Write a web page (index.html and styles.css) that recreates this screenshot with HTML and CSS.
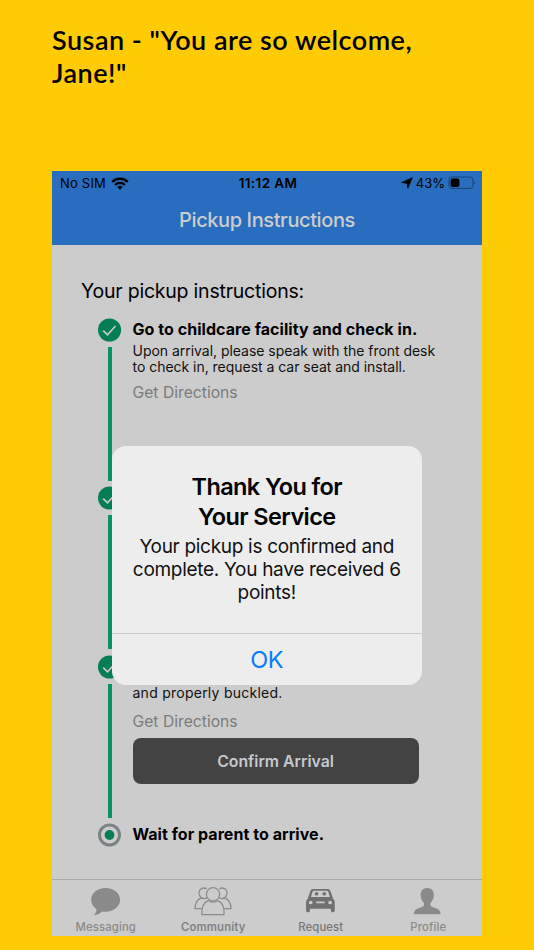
FILE: index.html
```html
<!DOCTYPE html>
<html lang="en">
<head>
  <meta charset="UTF-8">
  <meta name="viewport" content="width=device-width, initial-scale=1.0">
  <title>Pickup Instructions</title>
  <link rel="stylesheet" href="styles.css">
</head>
<body>
  <h1 class="caption">Susan - "You are so welcome,<br>Jane!"</h1>

  <div class="phone">
    <header class="header">
      <div class="status-bar">
        <div class="status-left">
          <span class="carrier">No SIM</span>
          <svg class="wifi" width="18" height="13" viewBox="0 0 18 13" fill="none" stroke="#000" stroke-width="2.3">
            <path d="M1.2 4.9a11.2 11.2 0 0 1 15.6 0"/>
            <path d="M4 8a7.1 7.1 0 0 1 10 0"/>
            <path d="M9 12.7 6.3 10a3.8 3.8 0 0 1 5.4 0z" fill="#000" stroke="none"/>
          </svg>
        </div>
        <span class="time">11:12 AM</span>
        <div class="status-right">
          <svg class="location" width="12" height="12" viewBox="0 0 12 12">
            <path d="M11.3.7 6.9 11.3 6 6.4.6 5.5z" fill="#000" stroke="#000" stroke-width=".7" stroke-linejoin="round"/>
          </svg>
          <span class="percent">43%</span>
          <svg class="battery" width="28" height="14" viewBox="0 0 28 14">
            <rect x="1" y="1" width="24" height="11.5" rx="3" fill="none" stroke="#1b4577"/>
            <rect x="2.6" y="2.5" width="8.8" height="8.6" rx="2" fill="#000"/>
            <path d="M26.2 4.6q1.6 2.1 0 4.2z" fill="#1b4577"/>
          </svg>
        </div>
      </div>
      <h2 class="header-title">Pickup Instructions</h2>
    </header>

    <main class="content">
      <h3 class="content-title">Your pickup instructions:</h3>

      <div class="step">
        <div class="rail">
          <svg class="marker" width="24" height="24" viewBox="0 0 24 24">
            <circle cx="11.5" cy="12" r="11.6" fill="#067e55"/>
            <path d="M5.3 12.6 9.5 16.8 17.5 8" fill="none" stroke="#ccc" stroke-width="1.5"/>
          </svg>
          <div class="line"></div>
        </div>
        <div class="step-body">
          <h4 class="step-title">Go to childcare facility and check in.</h4>
          <p class="step-text">Upon arrival, please speak with the front desk<br>to check in, request a car seat and install.</p>
          <a class="directions">Get Directions</a>
        </div>
      </div>

      <div class="step">
        <div class="rail">
          <svg class="marker" width="24" height="24" viewBox="0 0 24 24">
            <circle cx="11.5" cy="12" r="11.6" fill="#067e55"/>
            <path d="M5.3 12.6 9.5 16.8 17.5 8" fill="none" stroke="#ccc" stroke-width="1.5"/>
          </svg>
          <div class="line"></div>
        </div>
      </div>

      <div class="step">
        <div class="rail">
          <svg class="marker" width="24" height="24" viewBox="0 0 24 24">
            <circle cx="11.5" cy="12" r="11.6" fill="#067e55"/>
            <path d="M5.3 12.6 9.5 16.8 17.5 8" fill="none" stroke="#ccc" stroke-width="1.5"/>
          </svg>
          <div class="line"></div>
        </div>
        <div class="step-body step-body-end">
          <p class="step-text">and properly buckled.</p>
          <a class="directions">Get Directions</a>
          <button class="confirm">Confirm Arrival</button>
        </div>
      </div>

      <div class="step step-last">
        <div class="rail">
          <svg class="marker" width="24" height="24" viewBox="0 0 24 24">
            <circle cx="11.5" cy="12" r="10" fill="none" stroke="#7b8286" stroke-width="3"/>
            <circle cx="11.5" cy="12" r="4.9" fill="#067e55"/>
          </svg>
        </div>
        <div class="step-body">
          <h4 class="step-title">Wait for parent to arrive.</h4>
        </div>
      </div>
    </main>

    <nav class="tab-bar">
      <div class="tab">
        <svg width="40" height="32" viewBox="0 0 40 32">
          <path d="M19.5 1C27.8 1 34.5 6.2 34.5 13.2S27.8 25.6 19.5 25.6c-1.3 0-2.5-.1-3.6-.3-2.4 2.5-5.3 3.7-8.6 3.7 1.8-1.5 2.9-3.4 2.9-6C6.8 20.7 4.7 17.2 4.7 13.2 4.7 6.2 11.3 1 19.5 1z" fill="#8a8a8a"/>
        </svg>
        <span>Messaging</span>
      </div>
      <div class="tab tab-bold">
        <svg width="40" height="32" viewBox="0 0 40 32" fill="none" stroke="#8c8c8c" stroke-width="1.3">
          <circle cx="20" cy="7.5" r="6.8"/>
          <path d="M8.6 28.4c-.4-7 1.4-12.5 6.7-14.3 3 1.9 6.4 1.9 9.4 0 5.3 1.8 7.1 7.3 6.7 14.3z"/>
          <path d="M13.5 1.9C9.3-.3 5.5 2.1 5.5 6.3c0 2.3 1 3.9 2.6 4.9C3.4 12.8 1.5 17 1.5 22.3h6.9"/>
          <path d="M8.1 11.2c1.7 1 4 1 5.7-.1"/>
          <path d="M26.5 1.9c4.2-2.2 8 .2 8 4.4 0 2.3-1 3.9-2.6 4.9 4.7 1.6 6.6 5.8 6.6 11.1h-6.9"/>
          <path d="M31.9 11.2c-1.7 1-4 1-5.7-.1"/>
        </svg>
        <span>Community</span>
      </div>
      <div class="tab tab-dark">
        <svg width="40" height="32" viewBox="0 0 40 32">
          <path fill="#707070" fill-rule="evenodd" d="M11.9 2h15q2.2 0 2.9 2.1l2.7 8q1.7 1.3 1.7 3.5v8.6q0 1.9-2 1.9t-2-1.9v-1.7H8.6v1.7q0 1.9-2 1.9t-2-1.9v-8.6q0-2.2 1.7-3.5l2.7-8q.7-2.1 2.9-2.1zM12.8 3.9q-1.2 0-1.5 1.1L9.6 10.3h19.6L27.5 5q-.3-1.1-1.5-1.1z"/>
          <circle cx="15.4" cy="7" r="1.9" fill="#707070"/>
          <circle cx="23.4" cy="7" r="1.9" fill="#707070"/>
          <circle cx="9.4" cy="16" r="1.9" fill="#ccc"/>
          <circle cx="29.4" cy="16" r="1.9" fill="#ccc"/>
          <rect x="14.9" y="14.9" width="9" height="2" rx="1" fill="#ccc"/>
        </svg>
        <span>Request</span>
      </div>
      <div class="tab">
        <svg width="40" height="32" viewBox="0 0 40 32">
          <path d="M19.2 1c4.6 0 6.9 3 6.8 7.2-.1 3.7-1.3 6.2-3.2 8.1-.9 1.6-.3 3.8 2.3 4.6 4.5 1.5 7.6 2.2 7.9 7.1H5.4c.3-4.9 3.4-5.6 7.9-7.1 2.6-.8 3.2-3 2.3-4.6-1.9-1.9-3.1-4.4-3.2-8.1C12.3 4 14.6 1 19.2 1z" fill="#8a8a8a"/>
        </svg>
        <span>Profile</span>
      </div>
    </nav>

    <div class="alert">
      <div class="alert-body">
        <h2 class="alert-title">Thank You for<br>Your Service</h2>
        <p class="alert-text">Your pickup is confirmed and<br>complete. You have received 6<br>points!</p>
      </div>
      <button class="alert-button">OK</button>
    </div>
  </div>
</body>
</html>
```

FILE: styles.css
```css
* {
  box-sizing: border-box;
}

body {
  margin: 0;
  height: 950px;
  padding: 23px 52px 0;
  background-color: #ffcb05;
  font-family: Inter, "Liberation Sans", sans-serif;
  color: #000;
  overflow: hidden;
}

h1, h2, h3, h4, p {
  margin: 0;
}

button {
  font-family: inherit;
  border: none;
}

.caption {
  height: 148px;
  font-family: Lato, sans-serif;
  font-size: 27px;
  font-weight: 600;
  line-height: 33px;
  letter-spacing: 0.5px;
  white-space: nowrap;
}

.phone {
  position: relative;
  display: flex;
  flex-direction: column;
  width: 430px;
  height: 765px;
  background-color: #ccc;
}

/* header */

.header {
  height: 74px;
  background-color: #296dbe;
}

.status-bar {
  display: grid;
  grid-template-columns: 1fr auto 1fr;
  align-items: center;
  height: 24px;
  padding: 0 6px 0 8px;
  font-size: 13px;
  letter-spacing: 0.2px;
}

.status-left,
.status-right {
  display: flex;
  align-items: center;
}

.status-left {
  gap: 5px;
}

.status-right {
  justify-content: flex-end;
  gap: 3px;
}

.percent {
  letter-spacing: 0;
}

.time {
  font-size: 13.5px;
  font-weight: 600;
  letter-spacing: 0.4px;
}

.header-title {
  padding-top: 11px;
  font-size: 20px;
  font-weight: 500;
  line-height: 28px;
  letter-spacing: -0.4px;
  text-align: center;
  color: #ccc;
}

/* instructions */

.content {
  flex: 1;
  padding: 32px 29px 0;
}

.content-title {
  height: 41px;
  font-size: 19.5px;
  font-weight: 400;
  line-height: 28px;
  letter-spacing: -0.22px;
}

.step {
  display: flex;
  height: 168.3px;
  padding-left: 17px;
  gap: 10.5px;
}

.step-last {
  height: 24px;
}

.rail {
  display: flex;
  flex-direction: column;
  align-items: center;
  width: 24px;
}

.line {
  width: 4px;
  height: 134px;
  margin-top: 5px;
  background-color: #069464;
}

.step-body {
  display: flex;
  flex-direction: column;
  width: 320px;
  white-space: nowrap;
}

.step-title {
  font-size: 16px;
  font-weight: 700;
  line-height: 22px;
  letter-spacing: 0.05px;
}

.step-text {
  padding-top: 2.5px;
  font-size: 14px;
  line-height: 16.5px;
  letter-spacing: -0.03px;
  color: #111;
}

.directions {
  margin-top: 7px;
  font-size: 15.7px;
  line-height: 20px;
  color: #7b7b7b;
}

.step-body-end {
  justify-content: flex-end;
  padding-bottom: 39px;
}

.step-body-end .step-text {
  letter-spacing: 0.25px;
}

.step-body-end .directions {
  margin-top: 11px;
}

.confirm {
  width: 286px;
  height: 45.5px;
  margin-top: 6px;
  border-radius: 8px;
  background-color: #434343;
  color: #c5c9cf;
  font-size: 15.8px;
  font-weight: 600;
}

/* bottom tabs */

.tab-bar {
  display: flex;
  height: 57px;
  border-top: 1px solid #a9a9a9;
}

.tab {
  display: flex;
  flex: 1;
  flex-direction: column;
  align-items: center;
  padding-top: 7px;
  font-size: 11.3px;
  font-weight: 500;
  line-height: 18px;
  letter-spacing: 0.15px;
  color: #8a8a8a;
}

.tab-bold {
  font-weight: 600;
  color: #828282;
}

.tab-dark {
  color: #777;
}

/* alert dialog */

.alert {
  position: absolute;
  left: 60px;
  top: 275px;
  width: 309.5px;
  height: 238.5px;
  border-radius: 14px;
  background-color: #ededed;
  text-align: center;
  overflow: hidden;
}

.alert-body {
  height: 187px;
  padding-top: 26px;
}

.alert-title {
  font-size: 23.5px;
  font-weight: 600;
  line-height: 30px;
  letter-spacing: -0.6px;
}

.alert-text {
  padding-top: 3px;
  font-size: 19px;
  line-height: 23px;
  letter-spacing: -0.3px;
  color: #111;
}

.alert-button {
  width: 100%;
  height: 52px;
  border-top: 1px solid #ccc;
  background-color: transparent;
  font-size: 23.5px;
  letter-spacing: -0.5px;
  color: #0a7bfb;
}
```
